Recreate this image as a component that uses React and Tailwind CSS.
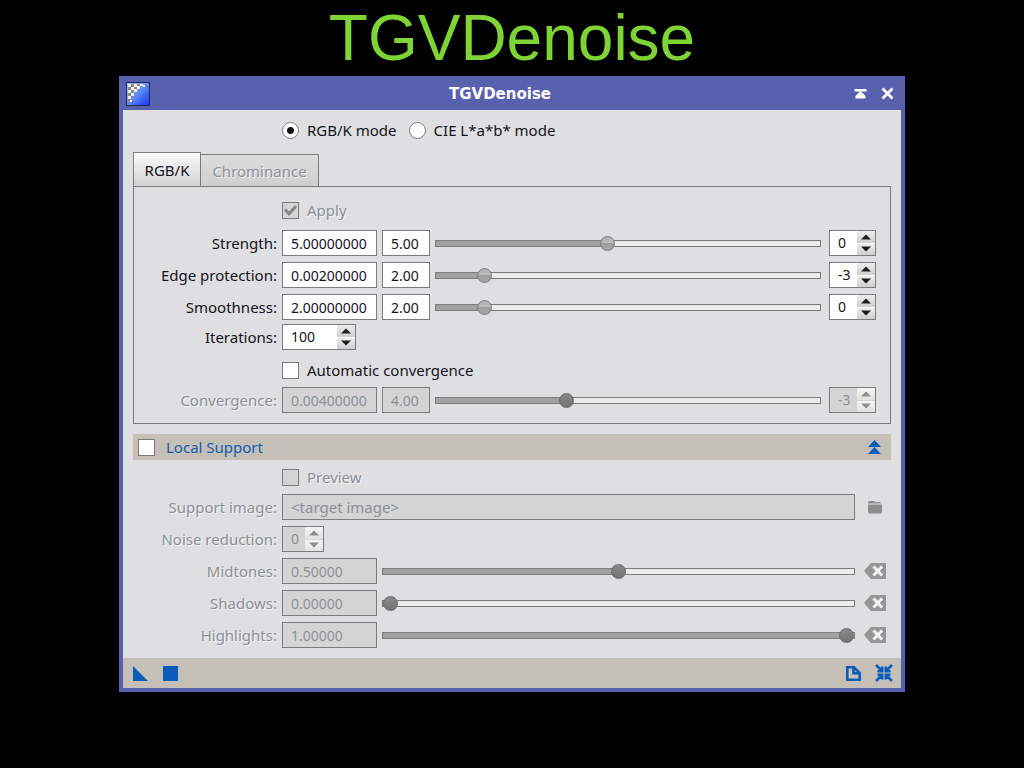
import { useState } from "react";

const FONT = "font-['Noto_Sans','Open_Sans',sans-serif]";

function Label({ htmlFor, disabled, children }) {
  return (
    <label
      htmlFor={htmlFor}
      className={
        "w-[143px] shrink-0 whitespace-nowrap text-right text-[15px] leading-5 " +
        (disabled ? "text-[#8d9095] [text-shadow:1px_1px_0_#f4f4f6]" : "text-[#14141c]")
      }
    >
      {children}
    </label>
  );
}

function Field({ id, label, value, disabled, width, size = "text-[14px]" }) {
  return (
    <input
      id={id}
      type="text"
      aria-label={label}
      defaultValue={value}
      disabled={disabled}
      className={
        "h-[26px] min-w-0 border border-[#7c7c7c] px-2 leading-5 outline-none " +
        size +
        " " +
        width +
        (disabled ? " bg-[#d4d4d4] text-[#8d9095]" : " bg-white text-[#14141c]")
      }
    />
  );
}

function Slider({ label, min, max, start, disabled }) {
  const [value, setValue] = useState(start);
  const part = (value - min) / (max - min);
  return (
    <input
      type="range"
      aria-label={label}
      min={min}
      max={max}
      step="0.01"
      value={value}
      disabled={disabled}
      onChange={(e) => setValue(Number(e.target.value))}
      style={{ "--fill": `calc(7px + (100% - 14px) * ${part})` }}
      className={
        "h-4 min-w-0 flex-1 appearance-none bg-transparent outline-none [&::-webkit-slider-runnable-track]:h-[7px] [&::-webkit-slider-runnable-track]:border [&::-webkit-slider-runnable-track]:border-[#7c7c7c] [&::-webkit-slider-runnable-track]:bg-[linear-gradient(to_right,#a2a2a2_var(--fill),#ececec_var(--fill))] [&::-webkit-slider-thumb]:-mt-[5px] [&::-webkit-slider-thumb]:size-[15px] [&::-webkit-slider-thumb]:appearance-none [&::-webkit-slider-thumb]:rounded-full [&::-webkit-slider-thumb]:border " +
        (disabled
          ? "[&::-webkit-slider-thumb]:border-[#6a6a6a] [&::-webkit-slider-thumb]:bg-[linear-gradient(#888,#747474)]"
          : "[&::-webkit-slider-thumb]:border-[#7c7c7c] [&::-webkit-slider-thumb]:bg-[linear-gradient(#b2b2b2,#bababa_45%,#9c9c9c_50%,#a6a6a6)]")
      }
    />
  );
}

function Spin({ id, label, start, disabled, width }) {
  const [value, setValue] = useState(start);
  const button =
    "flex flex-1 items-center justify-center " +
    (disabled
      ? "bg-[linear-gradient(#f4f4f4,#e2e2e2)] text-[#8d8d8d]"
      : "bg-[linear-gradient(#ececec,#cfcfcf)] text-[#1c1c20]");
  return (
    <div
      className={
        "flex h-[26px] shrink-0 border border-[#7c7c7c] " + width + (disabled ? " bg-[#d4d4d4]" : " bg-white")
      }
    >
      <input
        id={id}
        type="text"
        aria-label={label}
        value={value}
        disabled={disabled}
        onChange={(e) => setValue(e.target.value)}
        className={
          "min-w-0 flex-1 bg-transparent pl-2 text-[14px] leading-5 outline-none " +
          (disabled ? "text-[#8d9095]" : "text-[#14141c]")
        }
      />
      <div className="flex w-[18px] flex-col gap-px">
        <button type="button" aria-label={label + " up"} disabled={disabled} className={button} onClick={() => setValue(Number(value) + 1)}>
          <svg viewBox="0 0 10 6" className="h-1.5 w-2.5" fill="currentColor"><path d="M5 0.500l5 5H0z" /></svg>
        </button>
        <button type="button" aria-label={label + " down"} disabled={disabled} className={button} onClick={() => setValue(Number(value) - 1)}>
          <svg viewBox="0 0 10 6" className="h-1.5 w-2.5" fill="currentColor"><path d="M0 0.500h10l-5 5z" /></svg>
        </button>
      </div>
    </div>
  );
}

function Check({ id, checked, disabled, tone, gap, children }) {
  return (
    <div className={"flex items-center " + gap}>
      <span className="grid shrink-0">
        <input
          id={id}
          type="checkbox"
          defaultChecked={checked}
          disabled={disabled}
          className={
            "peer col-start-1 row-start-1 size-[17px] appearance-none border border-[#7c7c7c] " +
            (disabled ? "bg-[#d4d4d4]" : "bg-white")
          }
        />
        <svg
          viewBox="0 0 17 17"
          className="pointer-events-none invisible col-start-1 row-start-1 size-[17px] text-[#858585] peer-checked:visible"
          fill="none"
          stroke="currentColor"
          strokeWidth="3"
        >
          <path d="M3 7.5l4 4.3 7-7.6" />
        </svg>
      </span>
      <label htmlFor={id} className={"whitespace-nowrap text-[15px] leading-5 " + tone}>
        {children}
      </label>
    </div>
  );
}

function PowerRow({ id, name, mantissa, full, exponent, disabled }) {
  return (
    <div className="flex items-center">
      <Label htmlFor={id} disabled={disabled}>{name}:</Label>
      <div className="ml-[5px] flex min-w-0 flex-1 items-center gap-[5px]">
        <Field id={id} value={full} disabled={disabled} width="w-[95px]" />
        <Field label={name + " mantissa"} value={mantissa.toFixed(2)} disabled={disabled} width="w-12" />
        <Slider label={name + " slider"} min={1} max={10} start={mantissa} disabled={disabled} />
        <div className="ml-[3px] flex">
          <Spin label={name + " exponent"} start={exponent} disabled={disabled} width="w-[47px]" />
        </div>
      </div>
    </div>
  );
}

function LevelRow({ id, name, start }) {
  return (
    <div className="flex items-center">
      <Label htmlFor={id} disabled>{name}:</Label>
      <div className="ml-[5px] flex min-w-0 flex-1 items-center gap-[5px]">
        <Field id={id} value={start.toFixed(5)} disabled width="w-[95px]" />
        <Slider label={name + " slider"} min={0} max={1} start={start} disabled />
      </div>
      <button type="button" aria-label={"Reset " + name} disabled className="ml-[9px] mr-1">
        <svg viewBox="0 0 22 16" className="h-4 w-[22px]">
          <path d="M0 8L7 0h15v16H7z" fill="#959595" />
          <path d="M9.5 3.5l8.5 9M18 3.5l-8.500 9" stroke="#f2f2f2" strokeWidth="3.2" />
        </svg>
      </button>
    </div>
  );
}

function TitleIcon() {
  return (
    <svg viewBox="0 0 24 24" className="size-6 shrink-0" aria-hidden="true">
      <defs>
        <linearGradient id="tile" x1="0" y1="0" x2="1" y2="1">
          <stop offset="0" stopColor="#a8c4f4" />
          <stop offset="0.4" stopColor="#6c9cf8" />
          <stop offset="0.7" stopColor="#3c66f6" />
          <stop offset="1" stopColor="#2030f0" />
        </linearGradient>
      </defs>
      <rect x="0.5" y="0.5" width="23" height="23" fill="url(#tile)" stroke="#20285a" />
      <g fill="#f0f0ee">
        <path d="M2 2h3v3H2zM8 2h3v3H8zM14 2h3v2h-3zM5 5h3v3H5zM11 4h3v3h-3zM2 8h3v3H2zM8 7h3v3H8zM5 11h3v3H5zM2 14h3v3H2zM4 18h2v2H4zM17 3h2v2h-2z" />
      </g>
      <g fill="#8b8b88">
        <path d="M5 2h3v3H5zM11 2h3v2h-3zM2 5h3v3H2zM8 5h3v2H8zM5 8h3v3H5zM2 11h3v3H2zM5 14h2v2H5zM2 17h2v3H2zM17 2h2v1h-2z" />
      </g>
    </svg>
  );
}

function Mode({ id, checked, children }) {
  return (
    <div className="flex items-center gap-2">
      <input
        id={id}
        type="radio"
        name="mode"
        defaultChecked={checked}
        className="size-[17px] shrink-0 appearance-none rounded-full border border-[#7c7c7c] bg-white checked:bg-[radial-gradient(circle,#101014_3px,#ffffff_4px)]"
      />
      <label htmlFor={id} className="whitespace-nowrap text-[15px] leading-5 text-[#14141c]">{children}</label>
    </div>
  );
}

export default function App() {
  return (
    <div className={"min-h-screen bg-black " + FONT}>
      <h1 className="h-[76px] text-center font-['Liberation_Sans',Arial,sans-serif] text-[64px] leading-[76px] text-[#7fd435]">
        TGVDenoise
      </h1>
      <main className="mx-auto w-full max-w-[786px] border-x-4 border-b-4 border-[#5761ae] bg-[#dfdfe1]">
        <header className="flex h-[34px] items-center bg-[#5761ae] px-[3px] pt-px text-white">
          <TitleIcon />
          <h2 className="flex-1 text-center font-['DejaVu_Sans',sans-serif] text-[15px] font-bold leading-5">TGVDenoise</h2>
          <div className="flex gap-[14px] pl-1 pr-1">
            <button type="button" aria-label="Shade">
              <svg viewBox="0 0 13 13" className="size-[13px]" fill="currentColor"><path d="M0.500 2h12v2.500h-12zM6.500 4l5 5v2.500h-10V9z" /></svg>
            </button>
            <button type="button" aria-label="Close">
              <svg viewBox="0 0 13 13" className="size-[13px]" stroke="currentColor" strokeWidth="2.800"><path d="M1.500 1.500l10 10M11.500 1.500l-10 10" /></svg>
            </button>
          </div>
        </header>

        <div className="px-2.5">
          <div className="flex gap-3 pl-[149px] pt-[10px]">
            <Mode id="mode-rgb" checked>RGB/K mode</Mode>
            <Mode id="mode-lab">CIE L*a*b* mode</Mode>
          </div>

          <div role="tablist" className="mt-3 flex h-[34px] items-end">
            <button
              type="button"
              role="tab"
              aria-selected="true"
              className="h-[34px] w-[68px] border border-b-0 border-[#7c7c7c] bg-[linear-gradient(#fafafa,#d2d2d2)] text-[15px] leading-5 text-[#14141c]"
            >
              RGB/K
            </button>
            <button
              type="button"
              role="tab"
              aria-selected="false"
              disabled
              className="h-8 w-[118px] border border-b-0 border-l-0 border-[#7c7c7c] bg-[linear-gradient(#dcdcdc,#cfcfcf)] text-[15px] leading-5 text-[#8d9095] [text-shadow:1px_1px_0_#f4f4f6]"
            >
              Chrominance
            </button>
          </div>

          <section className="border border-[#7c7c7c] pb-2.5 pr-3.5 pt-[13px]">
            <div className="flex h-5 items-center pl-[148px]">
              <Check id="apply" checked disabled gap="gap-2" tone="text-[#8d9095] [text-shadow:1px_1px_0_#f4f4f6]">Apply</Check>
            </div>
            <div className="mt-2.5 flex flex-col gap-1.5">
              <PowerRow id="strength" name="Strength" full="5.00000000" mantissa={5} exponent={0} />
              <PowerRow id="edge" name="Edge protection" full="0.00200000" mantissa={2} exponent={-3} />
              <PowerRow id="smooth" name="Smoothness" full="2.00000000" mantissa={2} exponent={0} />
            </div>
            <div className="mt-1 flex items-center gap-[5px]">
              <Label htmlFor="iterations">Iterations:</Label>
              <Spin id="iterations" label="Iterations" start={100} width="w-[74px]" />
            </div>
            <div className="mt-2.5 flex h-5 items-center pl-[148px]">
              <Check id="auto" gap="gap-2" tone="text-[#14141c]">Automatic convergence</Check>
            </div>
            <div className="mt-[7px]">
              <PowerRow id="convergence" name="Convergence" full="0.00400000" mantissa={4} exponent={-3} disabled />
            </div>
          </section>

          <div className="mt-2.5 flex h-[26px] items-center justify-between bg-[#c4c0b8] pl-[5px] pr-2.5">
            <Check id="local" gap="gap-[11px]" tone="text-[#155cb0]">Local Support</Check>
            <button type="button" aria-label="Collapse Local Support">
              <svg viewBox="0 0 13 14" className="h-3.5 w-[13px]" fill="#0a5cb8"><path d="M6.500 0l6.500 7H0zM6.500 7l6.500 7H0z" /></svg>
            </button>
          </div>

          <section className="px-px pb-2.5">
            <div className="mt-[7px] flex h-5 items-center pl-[148px]">
              <Check id="preview" disabled gap="gap-2" tone="text-[#8d9095] [text-shadow:1px_1px_0_#f4f4f6]">Preview</Check>
            </div>
            <div className="mt-[7px] flex items-center">
              <Label htmlFor="support" disabled>Support image:</Label>
              <div className="ml-[5px] flex min-w-0 flex-1">
                <Field id="support" value="<target image>" disabled width="w-full" size="text-[15px]" />
              </div>
              <button type="button" aria-label="Choose support image" disabled className="ml-[13px] mr-2">
                <svg viewBox="0 0 14 14" className="size-3.5" fill="#8d8d8d"><path d="M0 3.500V2l1-1h5l1 1h5.500v1.500zM0 4.500h14V12l-1 1.500H1L0 12z" /></svg>
              </button>
            </div>
            <div className="mb-1.5 mt-1.5 flex items-center gap-[5px]">
              <Label htmlFor="noise" disabled>Noise reduction:</Label>
              <Spin id="noise" label="Noise reduction" start={0} disabled width="w-[42px]" />
            </div>
            <div className="flex flex-col gap-1.5">
              <LevelRow id="midtones" name="Midtones" start={0.5} />
              <LevelRow id="shadows" name="Shadows" start={0} />
              <LevelRow id="highlights" name="Highlights" start={1} />
            </div>
          </section>
        </div>

        <footer className="flex h-[30px] items-center justify-between bg-[#c4c0b8] pl-2.5 pr-2 text-[#0a5cb8]">
          <div className="flex gap-[15px]">
            <button type="button" aria-label="New instance">
              <svg viewBox="0 0 15 15" className="size-[15px]" fill="currentColor"><path d="M0 0l15 15H0z" /></svg>
            </button>
            <button type="button" aria-label="Apply to view">
              <svg viewBox="0 0 15 15" className="size-[15px]" fill="currentColor"><path d="M0 0h15v15H0z" /></svg>
            </button>
          </div>
          <div className="flex items-center gap-[14px]">
            <button type="button" aria-label="Documentation">
              <svg viewBox="0 0 15 15" className="size-[15px]" fill="none" stroke="currentColor" strokeWidth="2.600"><path d="M1.300 1.300h6.700l5.700 5.700v6.700H1.300zM7.500 1.300v6h6" /></svg>
            </button>
            <button type="button" aria-label="Reset">
              <svg viewBox="0 0 18 18" className="size-[18px]" fill="none" stroke="currentColor" strokeWidth="2.600"><path d="M1 1l6 6M17 1l-6 6M1 17l6-6M17 17l-6-6M2.500 7.200h4.700V2.500M15.500 7.200h-4.700V2.500M2.500 10.800h4.700v4.700M15.500 10.800h-4.700v4.700" /></svg>
            </button>
          </div>
        </footer>
      </main>
    </div>
  );
}
